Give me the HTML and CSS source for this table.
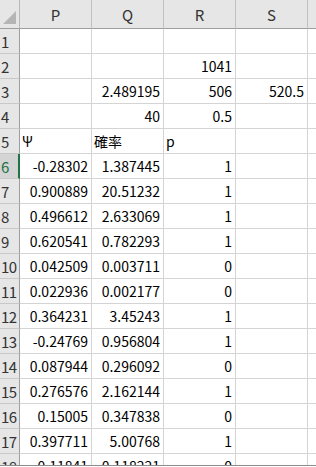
FILE: index.html
```html
<!DOCTYPE html>
<html lang="ja">
<head>
<meta charset="utf-8">
<link rel="stylesheet" href="styles.css">
</head>
<body>
<div class="frame">
  <div class="sheet">
    <div class="hd corner"><svg width="19" height="28" viewBox="0 0 19 28"><polygon points="3,24 16,24 16,11" fill="#b5b5b5"/></svg></div>
    <div class="hd col">P</div><div class="hd col">Q</div><div class="hd col">R</div><div class="hd col">S</div><div class="hd col last"></div>

    <div class="hd row">1</div><div class="c"></div><div class="c"></div><div class="c"></div><div class="c"></div><div class="c"></div>
    <div class="hd row">2</div><div class="c"></div><div class="c"></div><div class="c">1041</div><div class="c"></div><div class="c"></div>
    <div class="hd row">3</div><div class="c"></div><div class="c">2.489195</div><div class="c">506</div><div class="c">520.5</div><div class="c"></div>
    <div class="hd row">4</div><div class="c"></div><div class="c">40</div><div class="c">0.5</div><div class="c"></div><div class="c"></div>
    <div class="hd row">5</div><div class="c t">Ψ</div><div class="c t">確率</div><div class="c t">p</div><div class="c"></div><div class="c"></div>
    <div class="hd row sel">6</div><div class="c">-0.28302</div><div class="c">1.387445</div><div class="c">1</div><div class="c"></div><div class="c"></div>
    <div class="hd row">7</div><div class="c">0.900889</div><div class="c">20.51232</div><div class="c">1</div><div class="c"></div><div class="c"></div>
    <div class="hd row">8</div><div class="c">0.496612</div><div class="c">2.633069</div><div class="c">1</div><div class="c"></div><div class="c"></div>
    <div class="hd row">9</div><div class="c">0.620541</div><div class="c">0.782293</div><div class="c">1</div><div class="c"></div><div class="c"></div>
    <div class="hd row">10</div><div class="c">0.042509</div><div class="c">0.003711</div><div class="c">0</div><div class="c"></div><div class="c"></div>
    <div class="hd row">11</div><div class="c">0.022936</div><div class="c">0.002177</div><div class="c">0</div><div class="c"></div><div class="c"></div>
    <div class="hd row">12</div><div class="c">0.364231</div><div class="c">3.45243</div><div class="c">1</div><div class="c"></div><div class="c"></div>
    <div class="hd row">13</div><div class="c">-0.24769</div><div class="c">0.956804</div><div class="c">1</div><div class="c"></div><div class="c"></div>
    <div class="hd row">14</div><div class="c">0.087944</div><div class="c">0.296092</div><div class="c">0</div><div class="c"></div><div class="c"></div>
    <div class="hd row">15</div><div class="c">0.276576</div><div class="c">2.162144</div><div class="c">1</div><div class="c"></div><div class="c"></div>
    <div class="hd row">16</div><div class="c">0.15005</div><div class="c">0.347838</div><div class="c">0</div><div class="c"></div><div class="c"></div>
    <div class="hd row">17</div><div class="c">0.397711</div><div class="c">5.00768</div><div class="c">1</div><div class="c"></div><div class="c"></div>
    <div class="hd row">18</div><div class="c">0.11841</div><div class="c">0.118221</div><div class="c">0</div><div class="c"></div><div class="c"></div>
  </div>
</div>
</body>
</html>
```

FILE: styles.css
```css
html, body {
  margin: 0;
  padding: 0;
  background: #ffffff;
  overflow: hidden;
}
body {
  width: 316px;
  height: 467px;
  font-family: "Noto Sans CJK JP", "Noto Sans", sans-serif;
  font-size: 14px;
  color: #000;
}
.frame {
  width: 316px;
  height: 465px;
  overflow: hidden;
  border-bottom: 1px solid #8c8c8c;
}
.sheet {
  display: grid;
  grid-template-columns: 20px 72px 72px 72px 72px 72px;
  grid-template-rows: 29px;
  grid-auto-rows: 25px;
}
.sheet > div {
  box-sizing: border-box;
  border-right: 1px solid #d4d4d4;
  border-bottom: 1px solid #d4d4d4;
  white-space: nowrap;
  overflow: hidden;
}
.hd {
  background: #e6e6e6;
  color: #333;
}
.sheet > .corner {
  border-right: 1px solid #b8b8b8;
  border-bottom: 1px solid #9e9e9e;
  line-height: 0;
}
.sheet > .col {
  display: flex;
  align-items: center;
  justify-content: center;
  font-size: 15px;
  border-right: 1px solid #c2c2c2;
  border-bottom: 1px solid #9e9e9e;
  padding-top: 1px;
}
.sheet > .row {
  display: flex;
  align-items: center;
  padding-left: 1px;
  font-size: 15px;
  letter-spacing: -0.5px;
  border-right: 1px solid #9e9e9e;
  border-bottom: 1px solid #c8c8c8;
}
.sheet > .row.sel {
  background: #d4d4d4;
  color: #217346;
  border-right: 2px solid #217346;
}
.c {
  display: flex;
  align-items: flex-end;
  justify-content: flex-end;
  padding: 0 3px 2px 2px;
  line-height: 19px;
}
.c.t {
  justify-content: flex-start;
}
```
